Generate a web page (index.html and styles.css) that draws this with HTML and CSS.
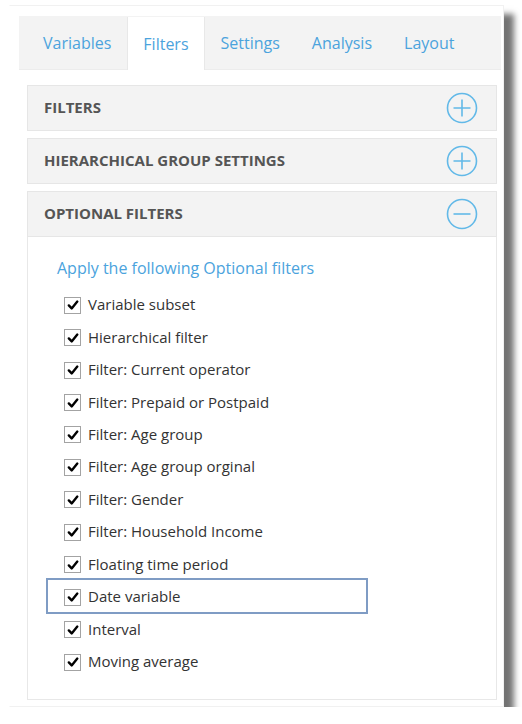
FILE: index.html
```html
<!DOCTYPE html>
<html lang="en">
<head>
<meta charset="utf-8">
<title>Filters</title>
<link rel="stylesheet" href="styles.css">
</head>
<body>
<div class="sheet">
  <nav class="tabs">
    <span class="tab">Variables</span>
    <span class="tab active">Filters</span>
    <span class="tab">Settings</span>
    <span class="tab">Analysis</span>
    <span class="tab">Layout</span>
  </nav>

  <section class="panel">
    <header class="panel-head">
      <span class="panel-title">FILTERS</span>
      <svg class="toggle" viewBox="0 0 32 32" width="32" height="32"><circle cx="16" cy="16" r="14.5"/><path d="M16 7.5v17M7.5 16h17"/></svg>
    </header>
  </section>

  <section class="panel">
    <header class="panel-head">
      <span class="panel-title">HIERARCHICAL GROUP SETTINGS</span>
      <svg class="toggle" viewBox="0 0 32 32" width="32" height="32"><circle cx="16" cy="16" r="14.5"/><path d="M16 7.5v17M7.5 16h17"/></svg>
    </header>
  </section>

  <section class="panel open">
    <header class="panel-head">
      <span class="panel-title">OPTIONAL FILTERS</span>
      <svg class="toggle" viewBox="0 0 32 32" width="32" height="32"><circle cx="16" cy="16" r="14.5"/><path d="M7.5 16h17"/></svg>
    </header>
    <div class="panel-body">
      <p class="lead">Apply the following Optional filters</p>
      <ul class="checks">
        <li class="check"><span class="box"><svg viewBox="0 0 12 12"><path d="M1.8 6.4l2.9 3L10.3 2.6"/></svg></span>Variable subset</li>
        <li class="check"><span class="box"><svg viewBox="0 0 12 12"><path d="M1.8 6.4l2.9 3L10.3 2.6"/></svg></span>Hierarchical filter</li>
        <li class="check"><span class="box"><svg viewBox="0 0 12 12"><path d="M1.8 6.4l2.9 3L10.3 2.6"/></svg></span>Filter: Current operator</li>
        <li class="check"><span class="box"><svg viewBox="0 0 12 12"><path d="M1.8 6.4l2.9 3L10.3 2.6"/></svg></span>Filter: Prepaid or Postpaid</li>
        <li class="check"><span class="box"><svg viewBox="0 0 12 12"><path d="M1.8 6.4l2.9 3L10.3 2.6"/></svg></span>Filter: Age group</li>
        <li class="check"><span class="box"><svg viewBox="0 0 12 12"><path d="M1.8 6.4l2.9 3L10.3 2.6"/></svg></span>Filter: Age group orginal</li>
        <li class="check"><span class="box"><svg viewBox="0 0 12 12"><path d="M1.8 6.4l2.9 3L10.3 2.6"/></svg></span>Filter: Gender</li>
        <li class="check"><span class="box"><svg viewBox="0 0 12 12"><path d="M1.8 6.4l2.9 3L10.3 2.6"/></svg></span>Filter: Household Income</li>
        <li class="check"><span class="box"><svg viewBox="0 0 12 12"><path d="M1.8 6.4l2.9 3L10.3 2.6"/></svg></span>Floating time period</li>
        <li class="check focused"><span class="box"><svg viewBox="0 0 12 12"><path d="M1.8 6.4l2.9 3L10.3 2.6"/></svg></span>Date variable</li>
        <li class="check"><span class="box"><svg viewBox="0 0 12 12"><path d="M1.8 6.4l2.9 3L10.3 2.6"/></svg></span>Interval</li>
        <li class="check"><span class="box"><svg viewBox="0 0 12 12"><path d="M1.8 6.4l2.9 3L10.3 2.6"/></svg></span>Moving average</li>
      </ul>
    </div>
  </section>
</div>
</body>
</html>
```

FILE: styles.css
```css
* {
  box-sizing: border-box;
}

html,
body {
  margin: 0;
  background: #ffffff;
}

body {
  font-family: "Open Sans", "DejaVu Sans", sans-serif;
  color: #333333;
}

/* outer card with a drop shadow on the right and bottom */
.sheet {
  width: 495px;
  height: 702px;
  margin: 5px 0 0 9px;
  padding: 10px 2px 0 9px;
  background: #ffffff;
  border: 1px solid #f1f1f1;
  border-left-color: transparent;
  box-shadow: 10px 9px 6px rgba(0, 0, 0, 0.55);
}

/* tab strip */
.tabs {
  display: flex;
  align-items: stretch;
  height: 54px;
  padding-left: 8px;
  background: #f3f3f3;
  border-bottom: 1px solid #ececec;
}

.tab {
  display: flex;
  align-items: center;
  padding: 1px 15px 0;
  font-size: 16px;
  color: #4ba3dd;
  border-left: 1px solid transparent;
  border-right: 1px solid transparent;
}

.tab.active {
  background: #ffffff;
  border-color: #e8e8e8;
  margin-top: 1px;
  margin-bottom: -1px;
}

/* collapsible panels */
.panel {
  margin: 15px 4px 0 8px;
}

.panel + .panel {
  margin-top: 7px;
}

.panel-head {
  display: flex;
  align-items: center;
  justify-content: space-between;
  height: 46px;
  padding: 0 18px 0 16px;
  background: #f3f3f3;
  border: 1px solid #e6e6e6;
}

.panel-title {
  font-size: 15px;
  font-weight: 700;
  color: #555555;
  padding-bottom: 2px;
}

.toggle {
  fill: none;
  stroke: #62b9e8;
  stroke-width: 1.6;
}

.panel-body {
  height: 463px;
  padding: 20px 0 0 19px;
  border: 1px solid #e8e8e8;
  border-top: none;
}

.lead {
  margin: 0 0 9px 10px;
  font-size: 16px;
  line-height: 22px;
  color: #4ba3dd;
}

.checks {
  list-style: none;
  margin: 0 0 0 1px;
  padding: 0;
  width: 318px;
}

.check {
  display: flex;
  align-items: center;
  height: 32.45px;
  padding-left: 16px;
  font-size: 15px;
  color: #333333;
}

.check.focused {
  outline: 2px solid #7f9cc4;
  outline-offset: 0;
}

.box {
  display: flex;
  align-items: center;
  justify-content: center;
  width: 17px;
  height: 17px;
  margin-right: 7px;
  margin-top: 2px;
  background: #ffffff;
  border: 1px solid #a3a3a3;
}

.box svg {
  width: 12px;
  height: 12px;
  fill: none;
  stroke: #000000;
  stroke-width: 2.4;
  stroke-linecap: round;
  stroke-linejoin: round;
}
```
